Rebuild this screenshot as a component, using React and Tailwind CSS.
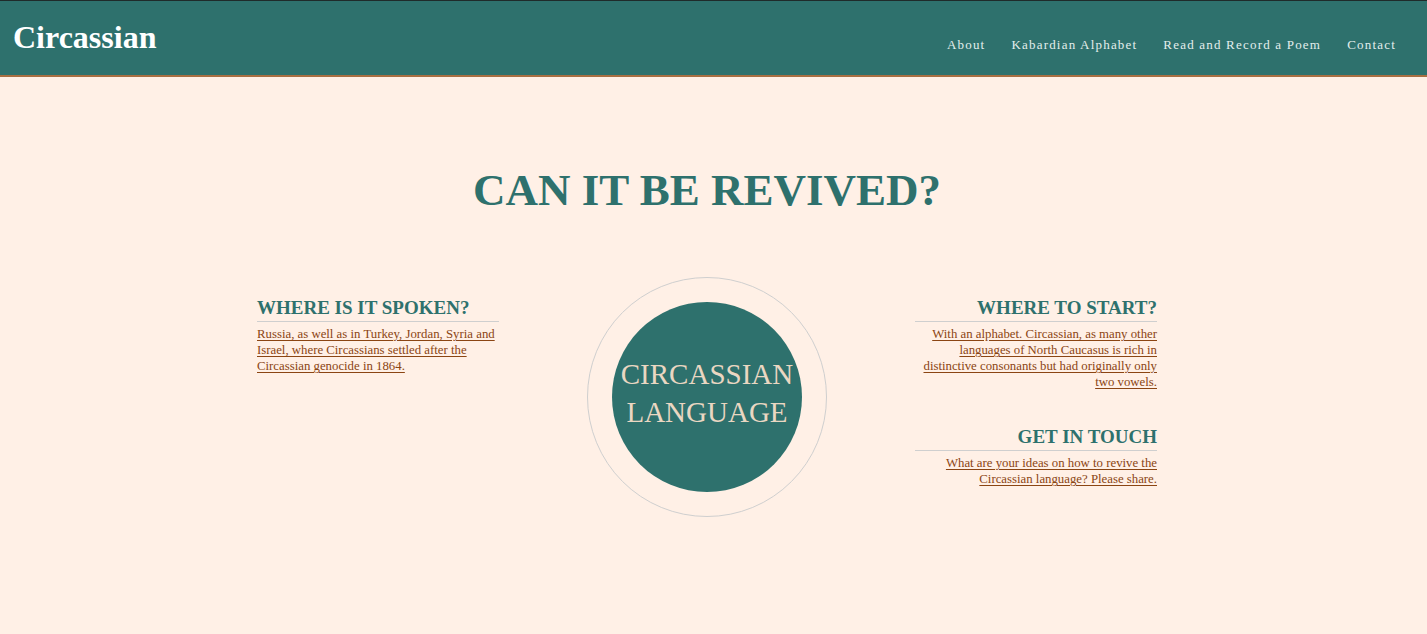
import React from "react";

const serif = { fontFamily: '"Liberation Serif", "Times New Roman", serif' };

const Section = ({ title, lines, right }) => (
  <div className={right ? "text-right" : "text-left"}>
    <h3 className="text-[19px] leading-[22px] font-bold text-[#2e716d] pb-[2px] border-b border-[#cfcfcf]">
      {title}
    </h3>
    <p className="mt-[4px] text-[12.8px] leading-[16px] text-[#8b4513] underline underline-offset-2 decoration-1">
      {lines.map((l, i) => (
        <React.Fragment key={i}>
          {l}
          {i < lines.length - 1 && <br />}
        </React.Fragment>
      ))}
    </p>
  </div>
);

const App = () => {
  const links = ["About", "Kabardian Alphabet", "Read and Record a Poem", "Contact"];

  return (
    <div className="min-h-[634px] bg-[#fff0e6]" style={serif}>
      {/* header */}
      <header className="h-[77px] bg-[#2e716d] border-t border-[#1f2b2a] border-b-2 border-b-[#a86f42] flex items-center justify-between pl-[13px] pr-[31px]">
        <h1 className="text-[32px] font-bold text-white leading-none -mt-[2px]">Circassian</h1>
        <nav className="flex gap-[26px] mt-[13px]">
          {links.map((l) => (
            <a key={l} className="text-[13px] tracking-[1.2px] text-[#e3eeec]">
              {l}
            </a>
          ))}
        </nav>
      </header>

      <main className="w-[1414px] flex flex-col items-center">
        <h2 className="mt-[87px] text-[45px] leading-[52px] font-bold text-[#2e716d]">
          CAN IT BE REVIVED?
        </h2>

        <div className="mt-[61px] grid grid-cols-[242px_240px_242px] gap-x-[88px] items-start">
          <div className="pt-[20px]">
            <Section
              title="WHERE IS IT SPOKEN?"
              lines={[
                "Russia, as well as in Turkey, Jordan, Syria and",
                "Israel, where Circassians settled after the",
                "Circassian genocide in 1864.",
              ]}
            />
          </div>

          <div className="w-[240px] h-[240px] rounded-full border border-[#cfcfcf] flex items-center justify-center">
            <div className="w-[190px] h-[190px] rounded-full bg-[#2e716d] flex flex-col items-center justify-center pb-[8px]">
              <span className="text-[29px] leading-[38px] text-[#ead7c2]">CIRCASSIAN</span>
              <span className="text-[29px] leading-[38px] text-[#ead7c2]">LANGUAGE</span>
            </div>
          </div>

          <div className="pt-[20px] flex flex-col gap-[36px]">
            <Section
              right
              title="WHERE TO START?"
              lines={[
                "With an alphabet. Circassian, as many other",
                "languages of North Caucasus is rich in",
                "distinctive consonants but had originally only",
                "two vowels.",
              ]}
            />
            <Section
              right
              title="GET IN TOUCH"
              lines={["What are your ideas on how to revive the", "Circassian language? Please share."]}
            />
          </div>
        </div>
      </main>
    </div>
  );
};

export default App;
